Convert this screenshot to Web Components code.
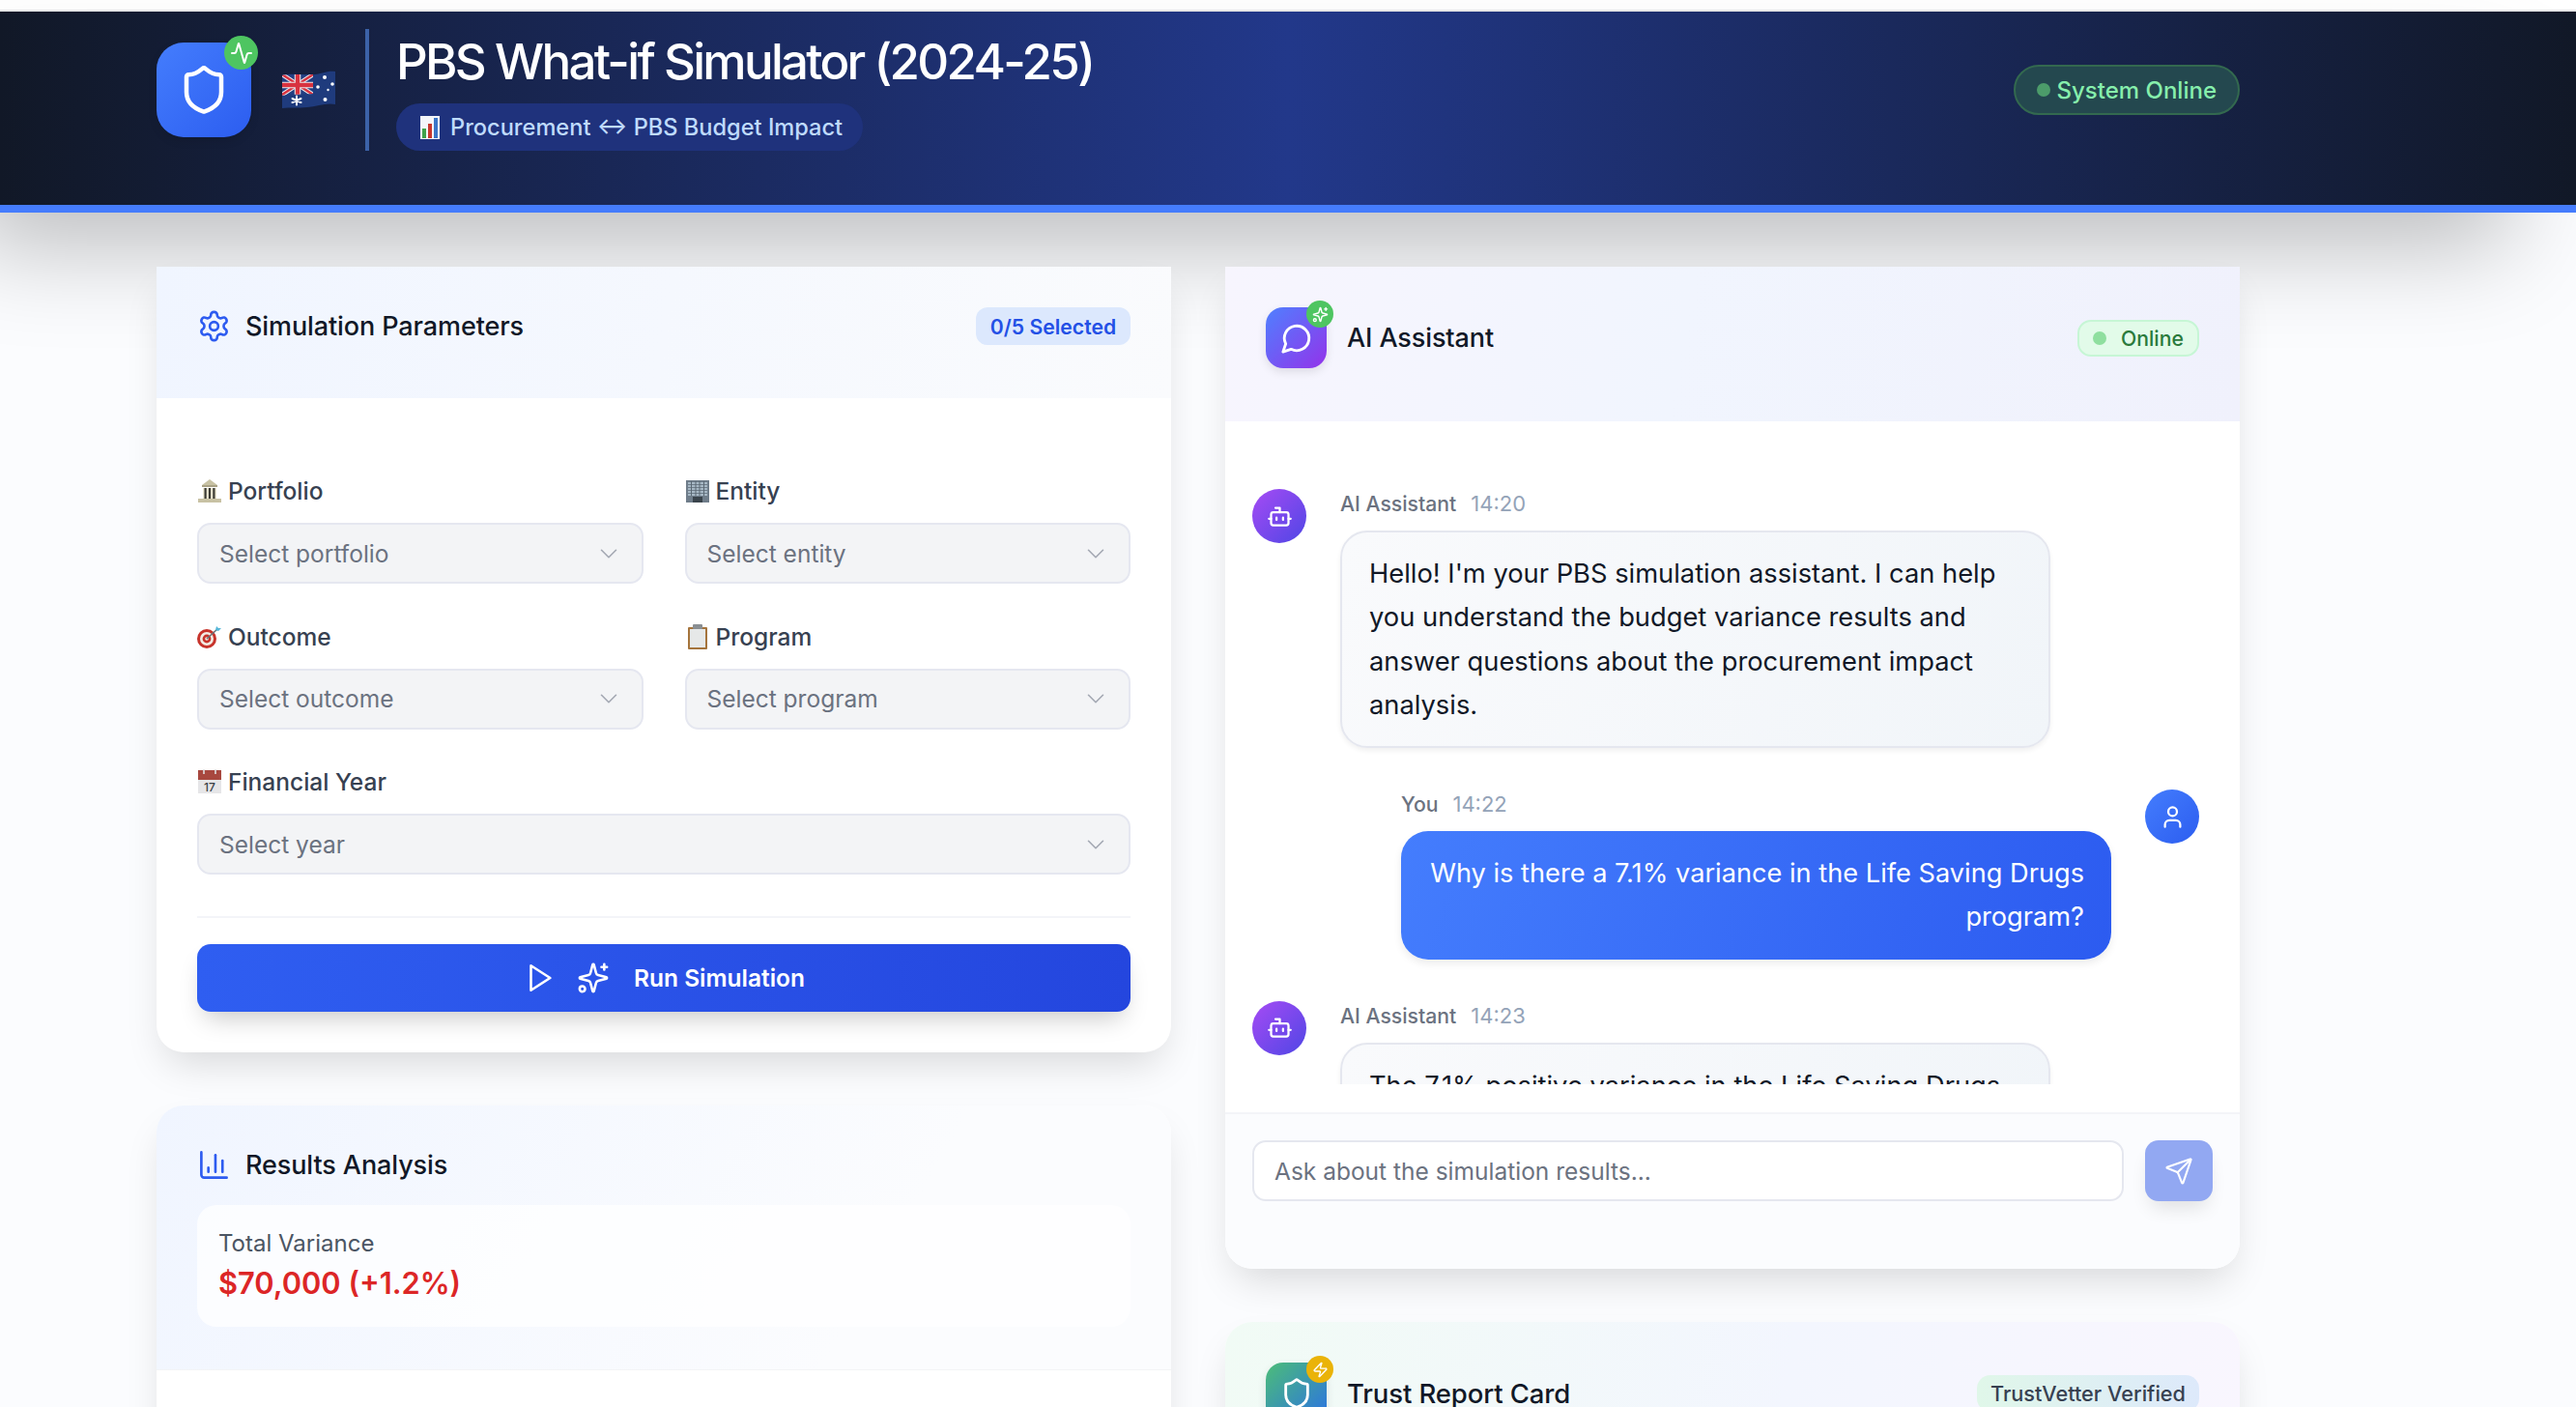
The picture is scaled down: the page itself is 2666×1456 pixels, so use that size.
<!DOCTYPE html>
<html lang="en">
<head>
<meta charset="utf-8">
<title>PBS What-if Simulator</title>
<style>
  html, body { margin: 0; height: 100%; overflow: hidden; background: #ffffff; }
  body { font-family: "Inter", "Noto Sans", sans-serif; }
</style>
</head>
<body>
<pbs-app>
  <pbs-header slot="header"></pbs-header>

  <pbs-card slot="left" square>
    <pbs-icon slot="icon" name="settings" size="35" color="#2d5bf0" stroke="1.8"></pbs-icon>
    <span slot="title">Simulation Parameters</span>
    <count-badge slot="aside">0/5 Selected</count-badge>
    <parameter-form></parameter-form>
  </pbs-card>

  <pbs-card slot="left" tint="results">
    <pbs-icon slot="icon" name="chart" size="35" color="#2d5bf0" stroke="1.8"></pbs-icon>
    <span slot="title">Results Analysis</span>
    <variance-box slot="extra" label="Total Variance" value="$70,000 (+1.2%)"></variance-box>
    <div style="height:120px"></div>
  </pbs-card>

  <chat-panel slot="right"></chat-panel>

  <pbs-card slot="right" tint="trust" tall>
    <badge-icon slot="icon" name="shield" badge="zap" from="#4cbd78" to="#2a70e6" dot="#eab308"></badge-icon>
    <span slot="title">Trust Report Card</span>
    <trust-badge slot="aside">TrustVetter Verified</trust-badge>
    <div style="height:120px"></div>
  </pbs-card>
</pbs-app>

<script>
// lucide shapes, drawn on a 24 unit grid
const ICONS = {
  shield: '<path d="M20 13c0 5-3.5 7.5-7.66 8.95a1 1 0 0 1-.67-.01C7.5 20.5 4 18 4 13V6a1 1 0 0 1 1-1c2 0 4.5-1.2 6.24-2.72a1.17 1.17 0 0 1 1.52 0C14.51 3.81 17 5 19 5a1 1 0 0 1 1 1z"/>',
  activity: '<path d="M22 12h-2.48a2 2 0 0 0-1.93 1.46l-2.35 8.36a.25.25 0 0 1-.48 0L9.24 2.18a.25.25 0 0 0-.48 0l-2.35 8.36A2 2 0 0 1 4.49 12H2"/>',
  settings: '<path d="M12.22 2h-.44a2 2 0 0 0-2 2v.18a2 2 0 0 1-1 1.73l-.43.25a2 2 0 0 1-2 0l-.15-.08a2 2 0 0 0-2.73.73l-.22.38a2 2 0 0 0 .73 2.73l.15.1a2 2 0 0 1 1 1.72v.51a2 2 0 0 1-1 1.74l-.15.09a2 2 0 0 0-.73 2.73l.22.38a2 2 0 0 0 2.73.73l.15-.08a2 2 0 0 1 2 0l.43.25a2 2 0 0 1 1 1.73V20a2 2 0 0 0 2 2h.44a2 2 0 0 0 2-2v-.18a2 2 0 0 1 1-1.73l.43-.25a2 2 0 0 1 2 0l.15.08a2 2 0 0 0 2.73-.73l.22-.39a2 2 0 0 0-.73-2.73l-.15-.08a2 2 0 0 1-1-1.74v-.5a2 2 0 0 1 1-1.74l.15-.09a2 2 0 0 0 .73-2.73l-.22-.38a2 2 0 0 0-2.73-.73l-.15.08a2 2 0 0 1-2 0l-.43-.25a2 2 0 0 1-1-1.73V4a2 2 0 0 0-2-2z"/><circle cx="12" cy="12" r="3"/>',
  chart: '<path d="M3 3v16a2 2 0 0 0 2 2h16"/><path d="M18 17V9"/><path d="M13 17V5"/><path d="M8 17v-3"/>',
  chevron: '<path d="m6 9 6 6 6-6"/>',
  play: '<polygon points="6 3 20 12 6 21 6 3"/>',
  sparkles: '<path d="M9.937 15.5A2 2 0 0 0 8.5 14.063l-6.135-1.582a.5.5 0 0 1 0-.962L8.5 9.936A2 2 0 0 0 9.937 8.5l1.582-6.135a.5.5 0 0 1 .963 0L14.063 8.5A2 2 0 0 0 15.5 9.937l6.135 1.581a.5.5 0 0 1 0 .964L15.5 14.063a2 2 0 0 0-1.437 1.437l-1.582 6.135a.5.5 0 0 1-.963 0z"/><path d="M20 2v4"/><path d="M22 4h-4"/><circle cx="4" cy="20" r="2"/>',
  message: '<path d="M7.9 20A9 9 0 1 0 4 16.1L2 22Z"/>',
  bot: '<path d="M12 8V4H8"/><rect width="16" height="12" x="4" y="8" rx="2"/><path d="M2 14h2"/><path d="M20 14h2"/><path d="M15 13v2"/><path d="M9 13v2"/>',
  user: '<path d="M19 21v-2a4 4 0 0 0-4-4H9a4 4 0 0 0-4 4v2"/><circle cx="12" cy="7" r="4"/>',
  send: '<path d="M14.536 21.686a.5.5 0 0 0 .937-.024l6.5-19a.496.496 0 0 0-.635-.635l-19 6.5a.5.5 0 0 0-.024.937l7.93 3.18a2 2 0 0 1 1.112 1.11z"/><path d="m21.854 2.147-10.94 10.939"/>',
  zap: '<path d="M4 14a1 1 0 0 1-.78-1.63l9.9-10.2a.5.5 0 0 1 .86.46l-1.92 6.02A1 1 0 0 0 13 10h7a1 1 0 0 1 .78 1.63l-9.9 10.2a.5.5 0 0 1-.86-.46l1.92-6.02A1 1 0 0 0 11 14z"/>'
};

// the emoji have no colour font here, so they are small drawings
const EMOJI = {
  chart: '<rect x="3" y="1" width="20" height="24" fill="#f4f6fa"/><rect x="5" y="14" width="4" height="10" fill="#3fa24a"/><rect x="11" y="9" width="4" height="15" fill="#c8372d"/><rect x="17" y="3" width="4" height="21" fill="#3b76c8"/>',
  bank: '<path d="M13 1 5 7h16z" fill="#c8c2a4"/><rect x="5" y="7" width="16" height="2" fill="#a9a285"/><rect x="6" y="10" width="14" height="11" fill="#ece8d4"/><rect x="7.5" y="10" width="2.2" height="11" fill="#3b3a33"/><rect x="11.9" y="10" width="2.2" height="11" fill="#3b3a33"/><rect x="16.3" y="10" width="2.2" height="11" fill="#3b3a33"/><rect x="1" y="21" width="24" height="4" fill="#c8c2a4"/>',
  building: '<rect x="1" y="2" width="24" height="23" fill="#6f7d8a"/><path d="M3 5h20M3 8h20M3 11h20M3 14h20M3 17h20" stroke="#b9cad8" stroke-width="1.4"/><path d="M6.5 3v15M11 3v15M15 3v15M19.5 3v15" stroke="#5a6873" stroke-width="1"/><rect x="8" y="19" width="10" height="6" fill="#3a444c"/>',
  target: '<circle cx="10" cy="15" r="10" fill="#c7332b"/><circle cx="10" cy="15" r="7" fill="#f3ece4"/><circle cx="10" cy="15" r="4.4" fill="#c7332b"/><circle cx="10" cy="15" r="1.8" fill="#f3ece4"/><path d="M10 15 21 5" stroke="#6a7378" stroke-width="1.6"/><path d="M19 6l1-4 2 2 3 0-3 3z" fill="#54b6d8"/>',
  clipboard: '<rect x="3" y="3" width="20" height="23" rx="1" fill="#a5743c"/><rect x="5" y="5" width="16" height="19" fill="#e6e8e8"/><rect x="8" y="0" width="10" height="5" rx="1" fill="#8a8f93"/>',
  calendar: '<rect x="1" y="1" width="24" height="24" fill="#e6e6e8"/><rect x="1" y="1" width="24" height="10" fill="#a8483f"/><path d="M7 0v5M19 0v5" stroke="#dfe0e2" stroke-width="1.6"/><text x="13" y="23" text-anchor="middle" font-family="Inter, sans-serif" font-size="12" fill="#3a3f45">17</text>'
};

class PbsIcon extends HTMLElement {
  connectedCallback() {
    const size = this.getAttribute('size') || 24;
    const color = this.getAttribute('color') || 'currentColor';
    const stroke = this.getAttribute('stroke') || 2;
    this.attachShadow({ mode: 'open' }).innerHTML = `
      <style>:host { display: inline-flex; flex: none; } svg { display: block; }</style>
      <svg width="${size}" height="${size}" viewBox="0 0 24 24" fill="none" stroke="${color}"
        stroke-width="${stroke}" stroke-linecap="round" stroke-linejoin="round">${ICONS[this.getAttribute('name')]}</svg>`;
  }
}

class PbsEmoji extends HTMLElement {
  connectedCallback() {
    const size = this.getAttribute('size') || 26;
    this.attachShadow({ mode: 'open' }).innerHTML = `
      <style>:host { display: inline-flex; flex: none; } svg { display: block; }</style>
      <svg width="${size}" height="${size}" viewBox="0 0 26 26">${EMOJI[this.getAttribute('name')]}</svg>`;
  }
}

// rounded tile with a little round badge on its corner
class BadgeIcon extends HTMLElement {
  connectedCallback() {
    const name = this.getAttribute('name');
    const badge = this.getAttribute('badge');
    const size = +(this.getAttribute('size') || 63);
    const inner = +(this.getAttribute('inner') || 34);
    const dot = +(this.getAttribute('dot-size') || 28);
    const dotIcon = +(this.getAttribute('dot-icon') || 17);
    this.attachShadow({ mode: 'open' }).innerHTML = `
      <style>
        :host { display: inline-flex; flex: none; position: relative; }
        .tile {
          width: ${size}px; height: ${size}px; border-radius: ${Math.round(size * 0.29)}px;
          background: linear-gradient(135deg, ${this.getAttribute('from')}, ${this.getAttribute('to')});
          display: flex; align-items: center; justify-content: center;
          box-shadow: 0 4px 10px rgba(0, 0, 0, .1);
        }
        .dot {
          position: absolute; top: -7px; right: -7px;
          width: ${dot}px; height: ${dot}px; border-radius: 50%;
          background: ${this.getAttribute('dot')};
          display: flex; align-items: center; justify-content: center;
        }
      </style>
      <div class="tile"><pbs-icon name="${name}" size="${inner}" color="#fff" stroke="${this.getAttribute('weight') || 2}"></pbs-icon></div>
      <div class="dot"><pbs-icon name="${badge}" size="${dotIcon}" color="#fff" stroke="2"></pbs-icon></div>`;
  }
}

class PbsApp extends HTMLElement {
  constructor() {
    super();
    this.attachShadow({ mode: 'open' }).innerHTML = `
      <style>
        :host { display: block; height: 1456px; overflow: hidden; padding-top: 10px; box-sizing: border-box; }
        main {
          background: #fbfcfe;
          height: 1300px;
          padding: 56px 348px 0 162px;
          display: grid;
          grid-template-columns: 1050px 1050px;
          column-gap: 56px;
          align-items: start;
        }
        .col { display: flex; flex-direction: column; gap: 55px; position: relative; z-index: 2; }
      </style>
      <slot name="header"></slot>
      <main>
        <div class="col"><slot name="left"></slot></div>
        <div class="col"><slot name="right"></slot></div>
      </main>`;
  }
}

class PbsHeader extends HTMLElement {
  constructor() {
    super();
    this.attachShadow({ mode: 'open' }).innerHTML = `
      <style>
        :host {
          display: block; position: relative; z-index: 1;
          border-top: 2px solid #e5e5e6;
          border-bottom: 8px solid #457cfd;
          background: linear-gradient(90deg, #111827 0%, #22388a 50%, #111827 100%);
          box-shadow: -50px 55px 100px -20px rgba(0, 0, 0, .25);
          color: #fff;
        }
        .bar {
          box-sizing: border-box; height: 200px;
          padding: 18px 348px 56px 162px;
          display: flex; align-items: center; justify-content: space-between;
        }
        .brand { display: flex; align-items: center; }
        .flag { margin-left: 32px; margin-right: 31px; display: block; }
        .rule { width: 4px; height: 126px; background: #3c62a8; margin-right: 28px; }
        .titles { display: flex; flex-direction: column; height: 126px; justify-content: space-between; }
        h1 { margin: 0; font-size: 51px; line-height: 62px; font-weight: 500; letter-spacing: -2.7px; margin-top: 3px; }
        .sub {
          align-self: flex-start; box-sizing: border-box; height: 49px;
          display: flex; align-items: center; gap: 8px;
          padding: 0 21px 0 22px; border-radius: 25px;
          background: #1f327c; color: #bfdbfe; font-size: 23.6px; font-weight: 500;
        }
        .status {
          box-sizing: border-box; height: 52px;
          display: flex; align-items: center; gap: 7px;
          padding: 0 22px; border-radius: 26px;
          background: #24484f; border: 2px solid #33694f;
          color: #86efac; font-size: 24px; font-weight: 500;
        }
        .status i { width: 14px; height: 14px; border-radius: 50%; background: #4c9c6a; }
      </style>
      <div class="bar">
        <div class="brand">
          <badge-icon name="shield" badge="activity" from="#447dfd" to="#2c5df0" dot="#4ec561"
            size="98" inner="54" dot-size="35" dot-icon="24" weight="2"></badge-icon>
          <svg class="flag" width="55" height="40" viewBox="0 0 55 40">
            <defs><clipPath id="jack"><path d="M0 5C8 3 22 5 32 4V24C22 25 8 24 0 26Z"/></clipPath></defs>
            <path d="M0 5C12 2 22 6 34 4S48 0 55 1V35C46 33 36 37 26 38S8 38 0 39Z" fill="#1f3b7d"/>
            <g clip-path="url(#jack)">
              <rect width="32" height="27" fill="#223e82"/>
              <path d="M0 4 32 25M32 4 0 25" stroke="#e8e8ec" stroke-width="4.5"/>
              <path d="M0 4 32 25M32 4 0 25" stroke="#d8323f" stroke-width="2.4"/>
              <path d="M16 3V27M0 15H32" stroke="#e8e8ec" stroke-width="6.5"/>
              <path d="M16 3V27M0 15H32" stroke="#d8323f" stroke-width="4.4"/>
            </g>
            <g fill="#fff">
              <circle cx="44" cy="7" r="2"/><circle cx="37" cy="17" r="1.8"/><circle cx="47.5" cy="20" r="1.2"/><circle cx="52" cy="14" r="1.8"/><circle cx="44.5" cy="30" r="2"/>
            </g>
            <path d="M15 26.500v9M10.500 29l9 4M19.500 29l-9 4" stroke="#fff" stroke-width="2" stroke-linecap="round"/>
          </svg>
          <div class="rule"></div>
          <div class="titles">
            <h1>PBS What-if Simulator (2024-25)</h1>
            <div class="sub"><pbs-emoji name="chart" size="26"></pbs-emoji><span>Procurement ↔ PBS Budget Impact</span></div>
          </div>
        </div>
        <div class="status"><i></i><span>System Online</span></div>
      </div>`;
  }
}

class PbsCard extends HTMLElement {
  constructor() {
    super();
    this.attachShadow({ mode: 'open' }).innerHTML = `
      <style>
        :host {
          display: block; background: #fff; border-radius: 28px;
          box-shadow: 0 20px 40px -10px rgba(0, 0, 0, .15);
          --head: linear-gradient(100deg, #f0f5ff 0%, #fafbfd 100%);
        }
        :host([square]) { border-radius: 0 0 28px 28px; }
        :host([tint="results"]) { --head: linear-gradient(120deg, #f0f5ff 0%, #fbfcfe 70%); }
        :host([tint="trust"]) { --head: linear-gradient(100deg, #f1fbf5 0%, #f3f6fe 55%, #f9f6fe 100%); }
        header { background: var(--head); padding: 42px 42px 55px; border-radius: 28px 28px 0 0; }
        :host([square]) header { border-radius: 0; }
        :host([tint="results"]) header { padding-bottom: 44px; border-bottom: 1px solid #f3f4f6; }
        .row { display: flex; align-items: center; min-height: 39px; }
        :host([tall]) .row { min-height: 63px; }
        .title { font-size: 27px; font-weight: 500; color: #111827; margin-left: 15px; letter-spacing: -.1px; }
        :host([tall]) .title { margin-left: 21px; font-size: 27.5px; }
        .aside { margin-left: auto; display: flex; }
      </style>
      <header>
        <div class="row">
          <slot name="icon"></slot>
          <span class="title"><slot name="title"></slot></span>
          <span class="aside"><slot name="aside"></slot></span>
        </div>
        <slot name="extra"></slot>
      </header>
      <slot></slot>`;
  }
}

class CountBadge extends HTMLElement {
  constructor() {
    super();
    this.attachShadow({ mode: 'open' }).innerHTML = `
      <style>
        :host {
          box-sizing: border-box; height: 39px; width: 160px; display: flex; align-items: center; justify-content: center;
          border-radius: 12px; background: #dce8fd; color: #2350e6; font-size: 21.2px; font-weight: 600;
        }
      </style><slot></slot>`;
  }
}

class TrustBadge extends HTMLElement {
  constructor() {
    super();
    this.attachShadow({ mode: 'open' }).innerHTML = `
      <style>
        :host {
          box-sizing: border-box; height: 38px; width: 230px; display: flex; align-items: center; justify-content: center;
          border-radius: 14px; background: linear-gradient(90deg, #e0f7e9, #dde9fb);
          color: #374151; font-size: 21.7px; font-weight: 500;
        }
      </style><slot></slot>`;
  }
}

class OnlineBadge extends HTMLElement {
  constructor() {
    super();
    this.attachShadow({ mode: 'open' }).innerHTML = `
      <style>
        :host {
          box-sizing: border-box; height: 38px; width: 126px; display: flex; align-items: center; gap: 15px;
          padding-left: 14px; border-radius: 14px; background: #e2fbe9; border: 2px solid #c6f6d5;
          color: #2a7a3c; font-size: 21.2px; font-weight: 500;
        }
        i { width: 14px; height: 14px; border-radius: 50%; background: #8fdf9f; }
      </style><i></i><slot></slot>`;
  }
}

class VarianceBox extends HTMLElement {
  connectedCallback() {
    this.attachShadow({ mode: 'open' }).innerHTML = `
      <style>
        :host {
          display: block; box-sizing: border-box; height: 126px; margin-top: 22px;
          padding: 24px 22px; border-radius: 20px; background: rgba(255, 255, 255, .72);
        }
        .l { font-size: 24px; line-height: 32px; color: #4b5563; }
        .v { font-size: 30.8px; line-height: 44px; font-weight: 600; color: #dc2626; margin-top: 3px; }
      </style>
      <div class="l">${this.getAttribute('label')}</div>
      <div class="v">${this.getAttribute('value')}</div>`;
  }
}

class SelectField extends HTMLElement {
  connectedCallback() {
    const wide = this.hasAttribute('wide');
    this.attachShadow({ mode: 'open' }).innerHTML = `
      <style>
        :host { display: block; ${wide ? 'grid-column: 1 / -1;' : ''} }
        label {
          display: flex; align-items: center; gap: 6px; height: 34px; margin-bottom: 16px;
          font-size: 24.5px; font-weight: 500; color: #374151;
        }
        .box {
          box-sizing: border-box; height: 63px; border-radius: 14px;
          display: flex; align-items: center; justify-content: space-between;
          padding: 0 19px 0 21px;
          background: #f3f4f6; border: 2px solid #e5e7f0;
          font-size: 24.5px; color: #6b7280;
        }
      </style>
      <label><pbs-emoji name="${this.getAttribute('emoji')}"></pbs-emoji><span>${this.getAttribute('label')}</span></label>
      <div class="box"><span>${this.getAttribute('placeholder')}</span><pbs-icon name="chevron" size="30" color="#a3a8b3" stroke="1.3"></pbs-icon></div>`;
  }
}

class ParameterForm extends HTMLElement {
  constructor() {
    super();
    this.attachShadow({ mode: 'open' }).innerHTML = `
      <style>
        :host { display: block; padding: 79px 42px 42px; }
        .grid { display: grid; grid-template-columns: 1fr 1fr; column-gap: 43px; row-gap: 37.5px; }
        hr { border: 0; height: 2px; background: #f3f4f8; margin: 43px 0 27px; }
        button {
          width: 100%; height: 70px; border: 0; border-radius: 14px; padding: 0;
          display: flex; align-items: center; justify-content: center;
          background: linear-gradient(90deg, #2f5ef1, #2446de);
          box-shadow: 0 14px 26px -8px rgba(0, 0, 0, .22);
          color: #fff; font: 600 24.5px "Inter", sans-serif;
        }
        .spark { margin: 0 25px 0 22px; }
      </style>
      <div class="grid">
        <select-field emoji="bank" label="Portfolio" placeholder="Select portfolio"></select-field>
        <select-field emoji="building" label="Entity" placeholder="Select entity"></select-field>
        <select-field emoji="target" label="Outcome" placeholder="Select outcome"></select-field>
        <select-field emoji="clipboard" label="Program" placeholder="Select program"></select-field>
        <select-field wide emoji="calendar" label="Financial Year" placeholder="Select year"></select-field>
      </div>
      <hr>
      <button type="button">
        <pbs-icon name="play" size="34" color="#fff" stroke="1.8"></pbs-icon>
        <pbs-icon class="spark" name="sparkles" size="34" color="#fff" stroke="1.8"></pbs-icon>
        <span>Run Simulation</span>
      </button>`;
  }
}

class ChatMessage extends HTMLElement {
  connectedCallback() {
    const mine = this.getAttribute('from') === 'user';
    this.attachShadow({ mode: 'open' }).innerHTML = `
      <style>
        :host { display: flex; gap: 35px; ${mine ? 'justify-content: flex-end;' : ''} }
        .avatar {
          width: 56px; height: 56px; border-radius: 50%; flex: none;
          display: flex; align-items: center; justify-content: center;
          background: ${mine ? 'linear-gradient(135deg, #447dfd, #2c5df0)' : 'linear-gradient(135deg, #a64bf4, #4f46e5)'};
          ${mine ? 'order: 2;' : ''}
        }
        .body { width: 735px; }
        .meta { height: 28px; margin-top: 1px; margin-bottom: 14px; display: flex; align-items: center; gap: 15px; font-size: 21.2px; }
        .who { color: #6b7280; font-weight: 500; }
        .at { color: #94a3b8; font-size: 22px; }
        .bubble {
          box-sizing: border-box; border-radius: 28px; line-height: 45.3px;
          ${mine
            ? 'font-size: 27.2px; padding: 21px 28px 21px 26px; color: #fff; text-align: right; background: linear-gradient(110deg, #447dfd, #2c5bf0); box-shadow: 0 4px 8px rgba(0,0,0,.08);'
            : 'font-size: 27.3px; padding: 20px 28px; color: #111827; background: linear-gradient(110deg, #f9fafc, #f1f5f9); border: 2px solid #e5e7ef; box-shadow: 0 3px 5px rgba(0,0,0,.06);'}
        }
      </style>
      <div class="avatar"><pbs-icon name="${mine ? 'user' : 'bot'}" size="27" color="#fff" stroke="2"></pbs-icon></div>
      <div class="body">
        <div class="meta"><span class="who">${mine ? 'You' : 'AI Assistant'}</span><span class="at">${this.getAttribute('time')}</span></div>
        <div class="bubble"><slot></slot></div>
      </div>`;
  }
}

class ChatPanel extends HTMLElement {
  constructor() {
    super();
    this.attachShadow({ mode: 'open' }).innerHTML = `
      <style>
        :host {
          display: block; background: #fff; border-radius: 0 0 28px 28px;
          box-shadow: 0 20px 40px -10px rgba(0, 0, 0, .15);
        }
        header {
          height: 160px; box-sizing: border-box; padding: 42px 42px 55px;
          display: flex; align-items: center; justify-content: space-between;
          background: linear-gradient(100deg, #f7f5fe 0%, #f1f5fe 45%, #f0f1fc 100%);
        }
        .who { display: flex; align-items: center; gap: 21px; font-size: 27px; font-weight: 500; color: #111827; letter-spacing: -.1px; }
        .log {
          height: 616px; overflow: hidden; padding: 70px 42px 0 28px;
          display: flex; flex-direction: column; gap: 43px;
        }
        .ask {
          margin-top: 29px; height: 162px; box-sizing: border-box;
          border-top: 2px solid #f3f4f8; padding: 27px 28px 0;
          border-radius: 0 0 28px 28px;
          background: #fbfcfe; display: flex; gap: 22px; align-items: flex-start;
        }
        .input {
          flex: 1; box-sizing: border-box; height: 63px; border-radius: 14px;
          background: #fff; border: 2px solid #e5e7ef;
          display: flex; align-items: center; padding-left: 21px;
          font-size: 24.5px; color: #6b7280;
        }
        .send {
          width: 70px; height: 63px; border-radius: 14px; background: #92a8f2;
          display: flex; align-items: center; justify-content: center;
          box-shadow: 0 12px 20px -6px rgba(0, 0, 0, .12);
        }
      </style>
      <header>
        <div class="who">
          <badge-icon name="message" badge="sparkles" from="#4f80ff" to="#9333ea" dot="#4ec561"></badge-icon>
          <span>AI Assistant</span>
        </div>
        <online-badge>Online</online-badge>
      </header>
      <div class="log">
        <chat-message from="ai" time="14:20">Hello! I'm your PBS simulation assistant. I can help you understand the budget variance results and answer questions about the procurement impact analysis.</chat-message>
        <chat-message from="user" time="14:22">Why is there a 7.1% variance in the Life Saving Drugs program?</chat-message>
        <chat-message from="ai" time="14:23">The 7.1% positive variance in the Life Saving Drugs program reflects higher procurement costs.</chat-message>
      </div>
      <div class="ask">
        <div class="input">Ask about the simulation results...</div>
        <div class="send"><pbs-icon name="send" size="30" color="#fff" stroke="1.7"></pbs-icon></div>
      </div>`;
  }
}

customElements.define('pbs-icon', PbsIcon);
customElements.define('pbs-emoji', PbsEmoji);
customElements.define('badge-icon', BadgeIcon);
customElements.define('count-badge', CountBadge);
customElements.define('trust-badge', TrustBadge);
customElements.define('online-badge', OnlineBadge);
customElements.define('variance-box', VarianceBox);
customElements.define('select-field', SelectField);
customElements.define('parameter-form', ParameterForm);
customElements.define('chat-message', ChatMessage);
customElements.define('chat-panel', ChatPanel);
customElements.define('pbs-card', PbsCard);
customElements.define('pbs-header', PbsHeader);
customElements.define('pbs-app', PbsApp);
</script>
</body>
</html>
